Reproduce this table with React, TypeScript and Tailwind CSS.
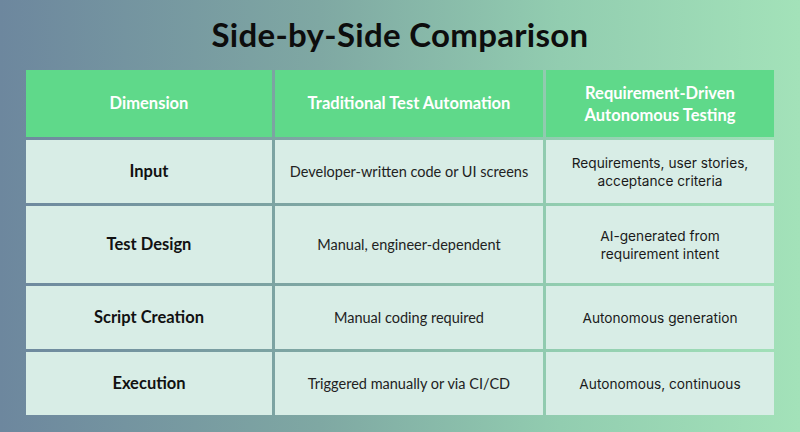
import React from "react";

const rows: { label: string; trad: string; auto: string[] }[] = [
  { label: "Input", trad: "Developer-written code or UI screens", auto: ["Requirements, user stories,", "acceptance criteria"] },
  { label: "Test Design", trad: "Manual, engineer-dependent", auto: ["AI-generated from", "requirement intent"] },
  { label: "Script Creation", trad: "Manual coding required", auto: ["Autonomous generation"] },
  { label: "Execution", trad: "Triggered manually or via CI/CD", auto: ["Autonomous, continuous"] },
];

export default function App() {
  return (
    <div className="w-[800px] h-[432px] overflow-hidden bg-[linear-gradient(90deg,#6d879e_0%,#7fa8a3_40%,#92cdb0_70%,#a3e2b9_100%)] flex flex-col [font-family:Lato,sans-serif]">
      <h1 className="h-[70px] flex items-center justify-center text-[33px] font-bold text-[#0d0d0d] tracking-[0.3px] pb-[1px]">
        Side-by-Side Comparison
      </h1>
      <div className="ml-[26px] grid grid-cols-[246px_268px_228px] grid-rows-[67px_63px_77px_63px_63px] gap-[3px]">
        <div className="bg-[#5fd98a] flex items-center justify-center text-white font-bold text-[16.5px]">Dimension</div>
        <div className="bg-[#5fd98a] flex items-center justify-center text-white font-bold text-[16.5px]">Traditional Test Automation</div>
        <div className="bg-[#5fd98a] flex flex-col items-center justify-center text-white font-bold text-[16.5px] leading-[22px] text-center">
          <span>Requirement-Driven</span>
          <span>Autonomous Testing</span>
        </div>
        {rows.map((r) => (
          <React.Fragment key={r.label}>
            <div className="bg-[#d8ede6] flex items-center justify-center text-[#111] font-bold text-[16.5px]">{r.label}</div>
            <div className="bg-[#d8ede6] flex items-center justify-center text-[#222] text-[14.5px]">{r.trad}</div>
            <div className="bg-[#d8ede6] flex flex-col items-center justify-center text-[#1a1a1a] text-[13.7px] leading-[18px] text-center [font-family:Inter,sans-serif]">
              {r.auto.map((l) => (
                <span key={l}>{l}</span>
              ))}
            </div>
          </React.Fragment>
        ))}
      </div>
    </div>
  );
}
